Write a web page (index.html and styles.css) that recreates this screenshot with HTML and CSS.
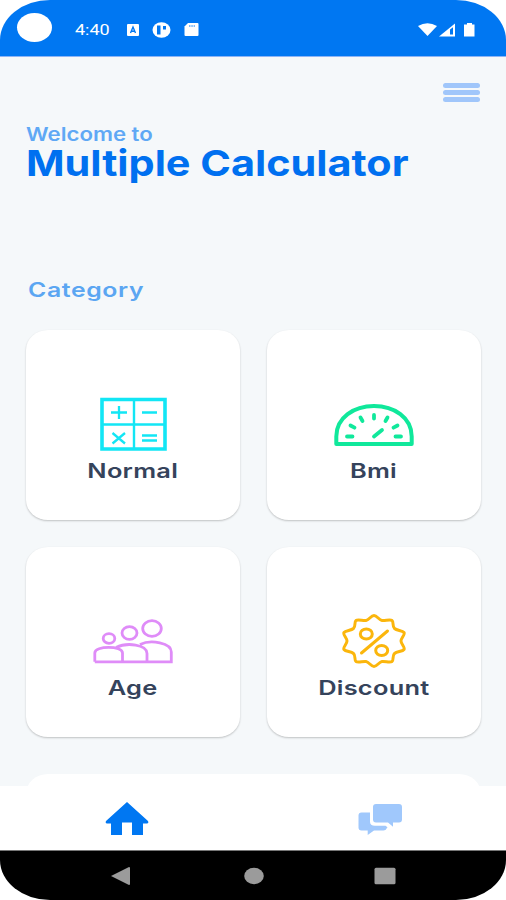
FILE: index.html
```html
<!DOCTYPE html>
<html lang="en">
<head>
    <meta charset="UTF-8">
    <meta name="viewport" content="width=device-width, initial-scale=1.0">
    <title>Multiple Calculator</title>
    <link rel="stylesheet" href="styles.css">
</head>
<body>
    <div class="phone">
        <header class="status-bar">
            <span class="camera"></span>
            <span class="time">4:40</span>
            <svg class="status-left" width="74" height="18" viewBox="0 0 74 18">
                <rect x="1" y="3" width="12" height="12" rx="1" fill="#fff"/>
                <path d="M4.500 12 7 6l2.500 6M5.300 10.300h3.400" fill="none" stroke="#0077f2" stroke-width="1.400"/>
                <ellipse cx="35.500" cy="9" rx="9" ry="7.800" fill="#fff"/>
                <path d="M31 4.500h3.500v9H31zM37 5h3v3.500h-3z" fill="#0077f2"/>
                <path d="M62 2h9.500q1 0 1 1v11q0 1-1 1H59.500q-1 0-1-1V5.500z" fill="#fff"/>
                <path d="M63 5h6" stroke="#0077f2" stroke-width="1" stroke-dasharray="1.500 .8"/>
            </svg>
            <svg class="status-right" width="60" height="18" viewBox="0 0 60 18">
                <path d="M2 5Q11.500-.5 21 5L11.500 15z" fill="#fff"/>
                <path d="M23 15.500 39 2.500v13z" fill="#fff"/>
                <path d="M34 8.500l3-2.200V13.500h-3z" fill="#0077f2"/>
                <path d="M48 3.500h3V2h5v1.500h2.500v12H48z" fill="#fff"/>
            </svg>
        </header>

        <main class="content">
            <div class="menu">
                <span></span>
                <span></span>
                <span></span>
            </div>
            <p class="welcome">Welcome to</p>
            <h1 class="title">Multiple Calculator</h1>
            <h2 class="category">Category</h2>

            <div class="grid">
                <div class="card">
                    <svg width="68" height="56" viewBox="0 0 68 56" fill="none" stroke="#12e6f5">
                        <path d="M3 2.500h63v49.500H3z" stroke-width="3.600"/>
                        <path d="M35 3v50M2 27.500h64" stroke-width="2.400"/>
                        <path d="M12 15.500h16M20 9v13M43 15.500h15M43 38.500h15M43 43.500h15M13.500 36 26 46.500M26 36 13.500 46.500" stroke-width="2.300"/>
                    </svg>
                    <span class="label">Normal</span>
                </div>
                <div class="card">
                    <svg width="80" height="56" viewBox="0 0 80 56" fill="none" stroke="#10e89b" stroke-linecap="round" stroke-linejoin="round">
                        <path d="M2.300 47V39.500C2.300 20.500 20 9 40 9S77.700 20.500 77.700 39.500v7.500z" stroke-width="4"/>
                        <path d="M13 39.500h5.500M61.500 39.500H67M16.500 28.500l4 2.200M63.500 28.500l-4 2.200M26.500 20.500l2 3.500M53.500 20.500l-2 3.500M40 18v3.500M40 39.500l8-6.500" stroke-width="3.800"/>
                    </svg>
                    <span class="label">Bmi</span>
                </div>
                <div class="card">
                    <svg width="80" height="56" viewBox="0 -3 80 56" fill="none" stroke="#df8cf8" stroke-width="2.800">
                        <ellipse cx="16" cy="21.500" rx="5.800" ry="4.800"/>
                        <ellipse cx="36.500" cy="16" rx="7.500" ry="6.300"/>
                        <ellipse cx="59" cy="11.500" rx="9.300" ry="7.800"/>
                        <path d="M1.800 44.800V36C1.800 28.500 29.500 28.500 29.500 36v8.800"/>
                        <path d="M23 30.500C34 25 54 27.500 54 36.500v8.300M47 27.500C58 22 78.300 26 78.300 35v9.800H1.800"/>
                    </svg>
                    <span class="label">Age</span>
                </div>
                <div class="card">
                    <svg width="66" height="56" viewBox="0 0 66 56" fill="none" stroke="#fbb60c" stroke-width="3" stroke-linecap="round" stroke-linejoin="round">
                        <path d="M33 1.500c3 0 5 4.500 8 5s8-1.500 10 0 0 6 2.500 8 8 2 9.500 4-3 5.500-3 8.500 4.500 6.500 3 8.500-7 2-9.500 4-.5 6.500-2.500 8-7-.5-10 0-5 5-8 5-5-4.500-8-5-8 1.500-10 0 0-6-2.500-8-8-2-9.500-4 3-5.500 3-8.500-4.500-6.500-3-8.500 7-2 9.500-4 .5-6.500 2.500-8 7 .5 10 0 5-5 8-5z"/>
                        <ellipse cx="25.300" cy="20" rx="6" ry="5"/>
                        <ellipse cx="40.700" cy="36.500" rx="6" ry="5"/>
                        <path d="M20.500 39 46.500 17"/>
                    </svg>
                    <span class="label">Discount</span>
                </div>
                <div class="card card-wide"></div>
            </div>
        </main>

        <nav class="tab-bar">
            <svg width="44" height="36" viewBox="0 0 44 36">
                <path d="M22 1 43 20q1 2-1 2.500h-4V34H27V21.500H17V34H6V22.500H2Q0 22 1 20z" fill="#0077f2"/>
            </svg>
            <svg width="44" height="36" viewBox="0 0 44 36" fill="#a0c8fc">
                <path d="M18 3h23q3 0 3 3v12.500q0 3-3 3h-6v4.300l-5-4.300H18q-3 0-3-3V6q0-3 3-3z"/>
                <path d="M3.500 11.500H12v9q0 4.300 5 4.300h10.500l2 1.500q-1.500 3.200-4 3.200H16l-6.300 4.500v-4.500H3.500q-3 0-3-3v-12q0-3 3-3z"/>
            </svg>
        </nav>

        <footer class="system-nav">
            <svg width="20" height="20" viewBox="0 0 20 20"><path d="M1 10 19 1q1 0 1 1v16q0 1-1 1z" fill="#9b9b9b"/></svg>
            <svg width="20" height="20" viewBox="0 0 20 20"><ellipse cx="10" cy="10" rx="9.800" ry="8.200" fill="#9b9b9b"/></svg>
            <svg width="22" height="20" viewBox="0 0 22 20"><rect x=".5" y="1.700" width="21" height="16.600" rx="1.500" fill="#9b9b9b"/></svg>
        </footer>
    </div>
</body>
</html>
```
FILE: styles.css
```css
* {
    box-sizing: border-box;
}
body {
    margin: 0;
    background-color: #fff;
    font-family: Inter, Roboto, sans-serif;
}
.phone {
    display: flex;
    flex-direction: column;
    width: 506px;
    height: 900px;
    border-radius: 50px / 40px;
    overflow: hidden;
    background-color: #f5f8fa;
}
.status-bar {
    display: flex;
    align-items: center;
    flex: none;
    height: 57px;
    padding: 4px 30px 0 17px;
    background-color: #0077f2;
    border-bottom: 1px solid #8cb4f6;
    color: #fff;
}
.camera {
    width: 35px;
    height: 29px;
    margin-bottom: 6px;
    border-radius: 50%;
    background-color: #fff;
}
.time {
    width: 51px;
    margin-left: 23px;
    font-family: Roboto, sans-serif;
    font-size: 15px;
    line-height: 18px;
    transform: scaleX(1.2);
    transform-origin: left;
}
.status-right {
    margin-left: auto;
}
.content {
    flex: 1;
    min-height: 0;
    padding: 26px 25px 0 26px;
    overflow: hidden;
}
.menu {
    display: flex;
    flex-direction: column;
    gap: 2px;
    width: 37px;
    margin-left: auto;
    margin-right: 1px;
}
.menu span {
    height: 5px;
    border-radius: 3px;
    background-color: #a0c6fa;
}
.welcome {
    width: max-content;
    margin: 23px 0 0;
    color: #5fa8f5;
    font-size: 18.5px;
    font-weight: 600;
    line-height: 19px;
    transform: scaleX(1.2);
    transform-origin: left;
}
.title {
    width: max-content;
    margin: 0;
    color: #0070f0;
    font-size: 36px;
    font-weight: 700;
    line-height: 38px;
    transform: scaleX(1.15);
    transform-origin: left;
}
.category {
    width: max-content;
    margin: 95px 0 0 2px;
    color: #5ba6f2;
    font-size: 20px;
    font-weight: 600;
    line-height: 26px;
    letter-spacing: 0.5px;
    transform: scaleX(1.24);
    transform-origin: left;
}
.grid {
    display: grid;
    grid-template-columns: 1fr 1fr;
    grid-auto-rows: 190px;
    gap: 27px;
    margin-top: 27px;
}
.card {
    display: flex;
    flex-direction: column;
    align-items: center;
    padding-top: 67px;
    border-radius: 22px / 20px;
    background-color: #fff;
    box-shadow: 0 1px 2px rgba(0, 0, 0, 0.22);
}
.card-wide {
    grid-column: 1 / 3;
    margin-top: 10px;
    box-shadow: none;
}
.label {
    margin-top: 5px;
    color: #35435b;
    font-size: 20px;
    font-weight: 600;
    line-height: 26px;
    letter-spacing: 0.2px;
    transform: scaleX(1.27);
}
.tab-bar {
    display: grid;
    grid-template-columns: 1fr 1fr;
    justify-items: center;
    align-items: center;
    flex: none;
    position: relative;
    height: 64px;
    padding-top: 1px;
    background-color: #fff;
}
.system-nav {
    display: flex;
    justify-content: space-between;
    align-items: center;
    flex: none;
    height: 50px;
    padding: 0 110px;
    background-color: #000;
    border-top: 1px solid #777;
}
.system-nav svg:nth-child(2) {
    margin-left: 3px;
}
```
